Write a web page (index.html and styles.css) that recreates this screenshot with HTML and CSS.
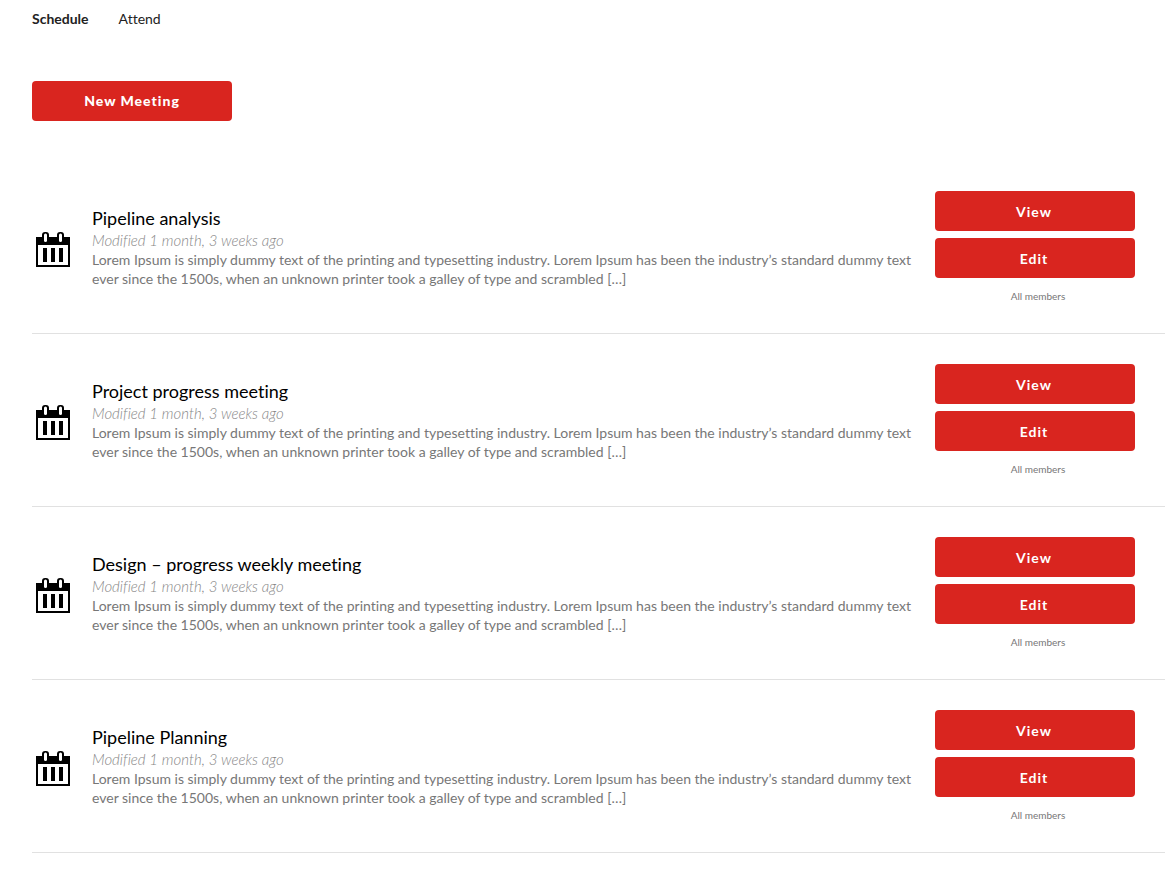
FILE: index.html
```html
<!DOCTYPE html>
<html lang="en">
  <head>
    <meta charset="utf-8">
    <title>Meetings</title>
    <meta name="viewport" content="width=device-width, initial-scale=1.0">
    <link rel="stylesheet" href="styles.css">
  </head>
  <body>
    <svg class="symbols" aria-hidden="true">
      <symbol id="calendar" viewBox="0 0 34 35">
        <path d="M0 5h34v30H0z" />
        <path fill="#fff" d="M2 13h30v20H2z" />
        <rect x="6" y="0" width="7" height="11" rx="3" />
        <rect x="21" y="0" width="7" height="11" rx="3" />
        <rect fill="#fff" x="8" y="1.5" width="3" height="8.5" rx="1.5" />
        <rect fill="#fff" x="23" y="1.5" width="3" height="8.5" rx="1.5" />
        <path d="M7 16h4v14H7zM15 16h4v14h-4zM23 16h4v14h-4z" />
      </symbol>
    </svg>

    <nav class="tabs">
      <a class="tab active" href="#schedule">Schedule</a>
      <a class="tab" href="#attend">Attend</a>
    </nav>

    <main>
      <button class="btn btn-new" type="button">New Meeting</button>

      <ul class="meetings">
        <li class="meeting">
          <svg class="icon" aria-hidden="true"><use href="#calendar" /></svg>
          <div class="info">
            <h2>Pipeline analysis</h2>
            <p class="modified">Modified 1 month, 3 weeks ago</p>
            <p>Lorem Ipsum is simply dummy text of the printing and typesetting industry. Lorem Ipsum has been the industry’s standard dummy text ever since the 1500s, when an unknown printer took a galley of type and scrambled […]</p>
          </div>
          <div class="actions">
            <button class="btn" type="button">View</button>
            <button class="btn" type="button">Edit</button>
            <span class="members">All members</span>
          </div>
        </li>
        <li class="meeting">
          <svg class="icon" aria-hidden="true"><use href="#calendar" /></svg>
          <div class="info">
            <h2>Project progress meeting</h2>
            <p class="modified">Modified 1 month, 3 weeks ago</p>
            <p>Lorem Ipsum is simply dummy text of the printing and typesetting industry. Lorem Ipsum has been the industry’s standard dummy text ever since the 1500s, when an unknown printer took a galley of type and scrambled […]</p>
          </div>
          <div class="actions">
            <button class="btn" type="button">View</button>
            <button class="btn" type="button">Edit</button>
            <span class="members">All members</span>
          </div>
        </li>
        <li class="meeting">
          <svg class="icon" aria-hidden="true"><use href="#calendar" /></svg>
          <div class="info">
            <h2>Design – progress weekly meeting</h2>
            <p class="modified">Modified 1 month, 3 weeks ago</p>
            <p>Lorem Ipsum is simply dummy text of the printing and typesetting industry. Lorem Ipsum has been the industry’s standard dummy text ever since the 1500s, when an unknown printer took a galley of type and scrambled […]</p>
          </div>
          <div class="actions">
            <button class="btn" type="button">View</button>
            <button class="btn" type="button">Edit</button>
            <span class="members">All members</span>
          </div>
        </li>
        <li class="meeting">
          <svg class="icon" aria-hidden="true"><use href="#calendar" /></svg>
          <div class="info">
            <h2>Pipeline Planning</h2>
            <p class="modified">Modified 1 month, 3 weeks ago</p>
            <p>Lorem Ipsum is simply dummy text of the printing and typesetting industry. Lorem Ipsum has been the industry’s standard dummy text ever since the 1500s, when an unknown printer took a galley of type and scrambled […]</p>
          </div>
          <div class="actions">
            <button class="btn" type="button">View</button>
            <button class="btn" type="button">Edit</button>
            <span class="members">All members</span>
          </div>
        </li>
      </ul>
    </main>
  </body>
</html>
```

FILE: styles.css
```css
* {
  box-sizing: border-box;
}
body {
  margin: 0;
  padding: 9px 10px 20px 32px;
  background: #fff;
  color: #777;
  font-family: Lato, sans-serif;
  font-size: 14px;
  line-height: 19px;
  font-variant-ligatures: none;
}

.symbols {
  display: none;
}

.tabs {
  display: flex;
  gap: 30px;
  line-height: 20px;
}
.tab {
  color: #222;
  text-decoration: none;
}
.tab.active {
  font-weight: bold;
}

.btn {
  width: 200px;
  height: 40px;
  border: 0;
  border-radius: 4px;
  padding: 0 2px 0 0;
  background: #d9251f;
  color: white;
  font-family: inherit;
  font-size: 14px;
  font-weight: bold;
  letter-spacing: 1px;
  cursor: pointer;
}
.btn-new {
  display: block;
  margin-top: 52px;
  padding: 0 0 2px;
  font-family: "Lato Black", Lato, sans-serif;
  font-weight: 900;
}

.meetings {
  margin: 40px 0 0;
  padding: 0;
  list-style: none;
}
.meeting {
  display: flex;
  align-items: center;
  padding: 30px 30px 28px 4px;
  border-bottom: 1px solid #e1e1e1;
}
.icon {
  flex: none;
  width: 34px;
  height: 35px;
  margin: 2px 22px 0 0;
  fill: #000;
}

.info {
  flex: 1;
  margin-right: 20px;
  padding-bottom: 4px;
}
.info h2 {
  margin: 0;
  color: #000;
  font-size: 18px;
  font-weight: normal;
  line-height: 26px;
}
.info p {
  margin: 0;
}
.info .modified {
  color: #888;
  font-size: 15px;
  font-style: italic;
  font-weight: 300;
}

.actions {
  display: flex;
  flex-direction: column;
  gap: 7px;
  width: 200px;
}
.members {
  padding: 2px 0 0 6px;
  font-size: 10px;
  line-height: 18px;
  text-align: center;
}
```
